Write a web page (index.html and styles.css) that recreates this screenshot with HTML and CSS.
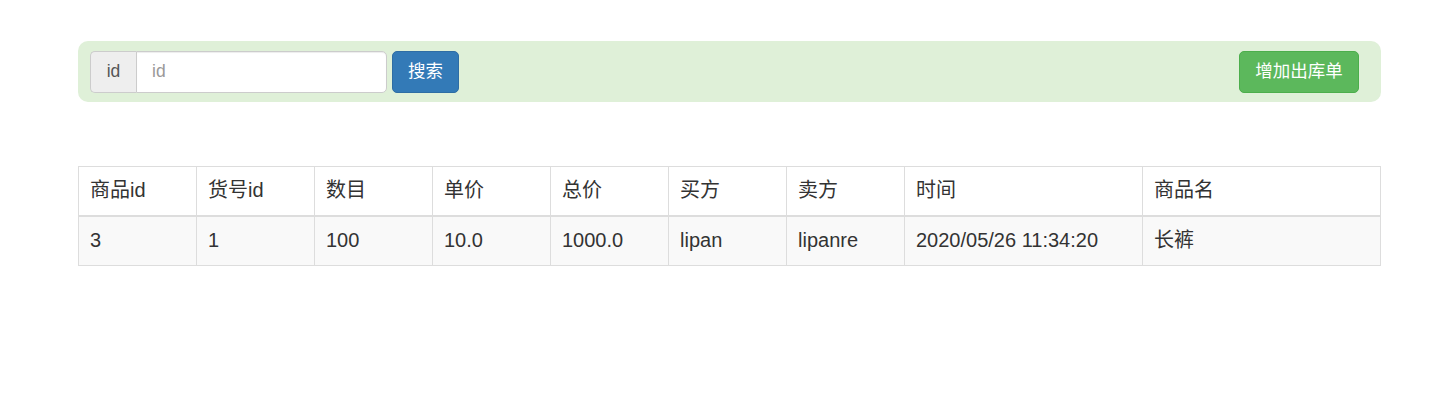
FILE: index.html
```html
<!DOCTYPE html>
<html lang="zh">
<head>
<meta charset="utf-8">
<title>出库单</title>
<link rel="stylesheet" href="styles.css">
</head>
<body>
<div class="page">
  <div class="toolbar">
    <div class="search">
      <span class="addon">id</span>
      <input class="field" type="text" placeholder="id">
      <button class="btn btn-primary" type="button">搜索</button>
    </div>
    <button class="btn btn-success" type="button">增加出库单</button>
  </div>
  <table class="grid">
    <thead>
      <tr>
        <th class="c">商品id</th>
        <th class="c">货号id</th>
        <th class="c">数目</th>
        <th class="c">单价</th>
        <th class="c">总价</th>
        <th class="c">买方</th>
        <th class="c">卖方</th>
        <th class="w">时间</th>
        <th>商品名</th>
      </tr>
    </thead>
    <tbody>
      <tr>
        <td>3</td>
        <td>1</td>
        <td>100</td>
        <td>10.0</td>
        <td>1000.0</td>
        <td>lipan</td>
        <td>lipanre</td>
        <td>2020/05/26 11:34:20</td>
        <td>长裤</td>
      </tr>
    </tbody>
  </table>
</div>
</body>
</html>
```
FILE: styles.css
```css
html, body {
  margin: 0;
  padding: 0;
  background: #fff;
}
body {
  font-family: "Liberation Sans", Arial, "Noto Sans CJK SC", sans-serif;
  font-size: 20px;
  line-height: 27.5px;
  color: #333;
}
.page {
  width: 1303px;
  padding: 41px 0 0 78px;
}
.toolbar {
  display: flex;
  align-items: center;
  justify-content: space-between;
  background: #dff0d8;
  border-radius: 10px;
  height: 61px;
  box-sizing: border-box;
  padding: 0 22px 0 12px;
  font-size: 17.5px;
  line-height: 25px;
}
.search {
  display: flex;
  align-items: center;
}
.addon {
  box-sizing: border-box;
  width: 46px;
  height: 42px;
  display: flex;
  align-items: center;
  justify-content: center;
  background: #eee;
  border: 1px solid #ccc;
  border-right: 0;
  border-radius: 5px 0 0 5px;
  color: #555;
}
.field {
  box-sizing: border-box;
  width: 251px;
  height: 42px;
  margin: 0;
  border: 1px solid #ccc;
  border-radius: 0 5px 5px 0;
  padding: 0 15px;
  font: inherit;
  color: #555;
  background: #fff;
  box-shadow: inset 0 1px 1px rgba(0,0,0,.075);
  outline: none;
}
.field::placeholder {
  color: #999;
}
.btn {
  box-sizing: border-box;
  height: 42px;
  margin: 0;
  padding: 0 15px;
  font: inherit;
  color: #fff;
  border-radius: 5px;
  border: 1px solid transparent;
  cursor: pointer;
}
.btn-primary {
  margin-left: 5px;
  width: 67px;
  background: #337ab7;
  border-color: #2e6da4;
}
.btn-success {
  width: 120px;
  background: #5cb85c;
  border-color: #4cae4c;
}
.grid {
  margin-top: 64px;
  width: 1303px;
  border-collapse: collapse;
  border: 1px solid #ddd;
  table-layout: fixed;
}
.grid th, .grid td {
  border: 1px solid #ddd;
  padding: 10px 10px 10px 11px;
  text-align: left;
  font-weight: normal;
  vertical-align: top;
}
.grid td {
  padding-bottom: 11px;
}
.grid th {
  border-bottom: 2px solid #ddd;
}
.grid th.c {
  width: 96px;
}
.grid th.w {
  width: 216px;
}
.grid tbody tr {
  background: #f9f9f9;
}
```
